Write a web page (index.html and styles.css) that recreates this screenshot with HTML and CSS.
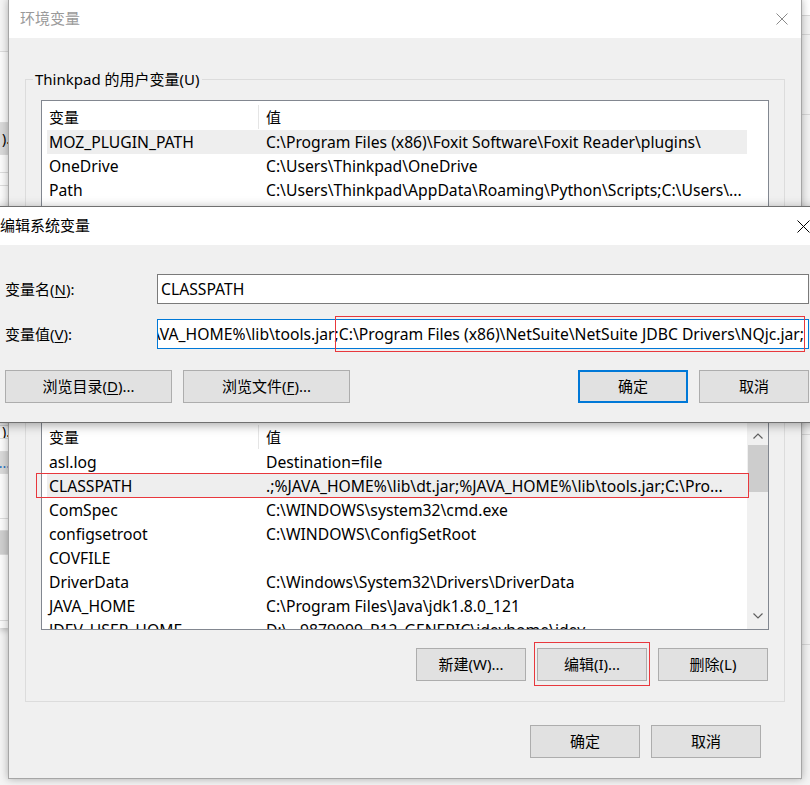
FILE: index.html
```html
<!DOCTYPE html>
<html lang="zh-CN">
<head>
  <meta charset="UTF-8">
  <title>环境变量</title>
  <link rel="stylesheet" href="styles.css">
</head>
<body>

  <!-- background windows peeking out at the edges -->
  <div class="bg-left">
    <div class="bl bl-top"></div>
    <div class="bl bl-plain h71"></div>
    <div class="bl bl-cell h32">).</div>
    <div class="bl bl-plain h18"></div>
    <div class="bl bl-plain h13"></div>
    <div class="bl bl-plain h240"></div>
    <div class="bl bl-plain h13">).</div>
    <div class="bl bl-plain h13"></div>
    <div class="bl bl-cell h22 dots">...</div>
    <div class="bl bl-plain h45"></div>
    <div class="bl bl-plain h12"></div>
    <div class="bl bl-dark h24"></div>
    <div class="bl bl-plain h66"></div>
  </div>
  <div class="bg-right">
    <div class="br h16 white"></div>
    <div class="br h19"></div>
    <div class="br h80"></div>
    <div class="br h320"></div>
    <div class="br h210"></div>
  </div>

  <!-- 环境变量 -->
  <div class="win env">
    <div class="titlebar">
      <span class="title">环境变量</span>
      <span class="close close-env">
        <svg width="12" height="12" viewBox="0 0 12 12"><path d="M0.5 0.5 L11.5 11.5 M11.5 0.5 L0.5 11.5" stroke="#8a8a8a" stroke-width="1" fill="none"/></svg>
      </span>
    </div>
    <div class="env-body">
      <fieldset class="group group-user">
        <legend>Thinkpad 的用户变量(U)</legend>
        <div class="list list-user">
          <div class="list-head">
            <div class="c1">变量</div>
            <div class="c2">值</div>
          </div>
          <div class="row sel"><div class="c1">MOZ_PLUGIN_PATH</div><div class="c2">C:\Program Files (x86)\Foxit Software\Foxit Reader\plugins\</div></div>
          <div class="row"><div class="c1">OneDrive</div><div class="c2">C:\Users\Thinkpad\OneDrive</div></div>
          <div class="row"><div class="c1">Path</div><div class="c2">C:\Users\Thinkpad\AppData\Roaming\Python\Scripts;C:\Users\...</div></div>
        </div>
        <div class="btn-row">
          <button class="btn">新建(N)...</button>
          <button class="btn">编辑(E)...</button>
          <button class="btn">删除(D)</button>
        </div>
      </fieldset>

      <fieldset class="group group-sys">
        <legend>系统变量(S)</legend>
        <div class="list list-sys">
          <div class="list-main">
            <div class="list-head">
              <div class="c1">变量</div>
              <div class="c2">值</div>
            </div>
            <div class="row"><div class="c1">asl.log</div><div class="c2">Destination=file</div></div>
            <div class="row sel marked"><div class="c1">CLASSPATH</div><div class="c2">.;%JAVA_HOME%\lib\dt.jar;%JAVA_HOME%\lib\tools.jar;C:\Pro...</div></div>
            <div class="row"><div class="c1">ComSpec</div><div class="c2">C:\WINDOWS\system32\cmd.exe</div></div>
            <div class="row"><div class="c1">configsetroot</div><div class="c2">C:\WINDOWS\ConfigSetRoot</div></div>
            <div class="row"><div class="c1">COVFILE</div><div class="c2"></div></div>
            <div class="row"><div class="c1">DriverData</div><div class="c2">C:\Windows\System32\Drivers\DriverData</div></div>
            <div class="row"><div class="c1">JAVA_HOME</div><div class="c2">C:\Program Files\Java\jdk1.8.0_121</div></div>
            <div class="row"><div class="c1">JDEV_USER_HOME</div><div class="c2">D:\...9879999_R12_GENERIC\jdevhome\jdev</div></div>
          </div>
          <div class="scrollbar">
            <svg class="arrow arrow-up" width="10" height="6" viewBox="0 0 10 6"><path d="M0.5 5.5 L5 1 L9.5 5.5" stroke="#606060" stroke-width="1.2" fill="none"/></svg>
            <div class="thumb"></div>
            <div class="track"></div>
            <svg class="arrow arrow-down" width="10" height="6" viewBox="0 0 10 6"><path d="M0.5 0.5 L5 5 L9.5 0.5" stroke="#606060" stroke-width="1.2" fill="none"/></svg>
          </div>
        </div>
        <div class="btn-row">
          <button class="btn">新建(W)...</button>
          <button class="btn marked-btn">编辑(I)...</button>
          <button class="btn">删除(L)</button>
        </div>
      </fieldset>

      <div class="dialog-actions">
        <button class="btn">确定</button>
        <button class="btn">取消</button>
      </div>
      <svg class="grip" width="10" height="10" viewBox="0 0 10 10" fill="#b8b8b8">
        <rect x="8" y="0" width="2" height="2"/>
        <rect x="4" y="4" width="2" height="2"/><rect x="8" y="4" width="2" height="2"/>
        <rect x="0" y="8" width="2" height="2"/><rect x="4" y="8" width="2" height="2"/><rect x="8" y="8" width="2" height="2"/>
      </svg>
    </div>
  </div>

  <!-- 编辑系统变量 -->
  <div class="win edit">
    <div class="titlebar">
      <span class="title">编辑系统变量</span>
      <span class="close close-edit">
        <svg width="13" height="13" viewBox="0 0 13 13"><path d="M0.5 0.5 L12.5 12.5 M12.5 0.5 L0.5 12.5" stroke="#000" stroke-width="1" fill="none"/></svg>
      </span>
    </div>
    <div class="edit-body">
      <div class="field-grid">
        <label class="field-label">变量名(<u>N</u>):</label>
        <div class="input"><div class="input-text">CLASSPATH</div></div>
        <label class="field-label">变量值(<u>V</u>):</label>
        <div class="input focused"><div class="input-text scrolled">%JAVA_HOME%\lib\tools.jar<span class="mark">;C:\Program Files (x86)\NetSuite\NetSuite JDBC Drivers\NQjc.jar;</span></div></div>
      </div>
      <div class="edit-actions">
        <button class="btn wide">浏览目录(<u>D</u>)...</button>
        <button class="btn wide">浏览文件(<u>F</u>)...</button>
        <button class="btn default push">确定</button>
        <button class="btn">取消</button>
      </div>
    </div>
  </div>

</body>
</html>
```

FILE: styles.css
```css
* {
  box-sizing: border-box;
}

body {
  margin: 0;
  width: 810px;
  height: 785px;
  overflow: hidden;
  position: relative;
  background: #f4f4f4;
  font-family: "Noto Sans", "Noto Sans CJK SC", sans-serif;
  font-size: 15px;
  color: #000;
}

/* ---------- background windows ---------- */

.bg-left {
  position: absolute;
  left: 0;
  top: 0;
  width: 10px;
  height: 628px;
  display: flex;
  flex-direction: column;
  background: #fafafa;
  box-shadow: 0 2px 6px rgba(0,0,0,0.25);
}

.bl {
  border-bottom: 1px solid #dcdcdc;
  font-size: 14px;
  line-height: 1;
  display: flex;
  align-items: center;
  justify-content: flex-end;
  overflow: hidden;
  white-space: nowrap;
}

.bl-top { height: 52px; background: #f5f5f5; }
.bl-plain { background: #fbfbfb; }
.bl-cell { background: #d9d9d9; }
.bl-dark { background: #cfcfcf; }
.dots { color: #1a6fc0; }

.h12 { height: 12px; }
.h13 { height: 13px; }
.h16 { height: 16px; }
.h18 { height: 18px; }
.h19 { height: 19px; }
.h22 { height: 22px; }
.h24 { height: 24px; }
.h32 { height: 32px; }
.h45 { height: 45px; }
.h66 { height: 66px; }
.h71 { height: 71px; }
.h80 { height: 80px; }
.h210 { height: 210px; }
.h240 { height: 240px; }
.h320 { height: 320px; }

.bg-right {
  position: absolute;
  left: 800px;
  top: 0;
  width: 10px;
  height: 780px;
  display: flex;
  flex-direction: column;
  background: #f3f3f3;
  border-left: 1px solid #e0e0e0;
}

.br {
  border-bottom: 1px solid #d8d8d8;
}

.br.white { background: #fff; }

/* ---------- windows ---------- */

.win {
  position: absolute;
  background: #f0f0f0;
  border: 1px solid #8c8c8c;
}

.titlebar {
  height: 38px;
  background: #fff;
  display: flex;
  align-items: center;
  justify-content: space-between;
}

.title {
  padding-bottom: 3px;
}

.close {
  height: 38px;
  display: flex;
  align-items: center;
  justify-content: center;
}

.btn {
  font-family: inherit;
  font-size: 15px;
  color: #000;
  background: #e1e1e1;
  border: 1px solid #adadad;
  height: 33px;
  width: 110px;
  padding: 0;
  line-height: 1;
}

.btn.default {
  border: 2px solid #0078d7;
}

u {
  text-decoration-thickness: 1px;
  text-underline-offset: 2px;
}

/* ---------- 环境变量 ---------- */

.env {
  left: 8px;
  top: -1px;
  width: 794px;
  height: 780px;
  border-color: #a6a6a6;
  box-shadow: 0 0 8px rgba(0,0,0,0.3);
}

.env .title {
  color: #9a9a9a;
  padding-left: 11px;
}

.close-env {
  width: 38px;
}

.env-body {
  position: relative;
  height: 740px;
  padding: 0 16px;
}

.group {
  margin: 0;
  border: 1px solid #dcdcdc;
  padding: 0 15px 20px 15px;
}

.group legend {
  padding: 0 2px;
  margin-left: -8px;
  line-height: 20px;
}

.group-user {
  margin-top: 31px;
  height: 322px;
}

.group-sys {
  margin-top: 5px;
}

.list {
  background: #fff;
  border: 1px solid #828790;
  margin-top: 11px;
  overflow: hidden;
}

.list-user {
  height: 220px;
  padding: 0 21px 0 5px;
}

.list-sys {
  margin-top: 4px;
  height: 210px;
  display: flex;
  overflow: visible;
}

.list-main {
  flex: 1;
  padding-left: 5px;
  overflow-x: visible;
  overflow-y: clip;
}

.list-head,
.row {
  display: flex;
  align-items: center;
  white-space: nowrap;
  font-size: 15.7px;
}

.list-head {
  height: 29px;
  padding-top: 2px;
  font-size: 15px;
}

.row {
  height: 24px;
  padding-bottom: 1px;
  position: relative;
}

.c1 {
  width: 212px;
  padding-left: 2px;
  flex-shrink: 0;
  overflow: hidden;
}

.c2 {
  flex: 1;
  padding-left: 7px;
  overflow: hidden;
}

.list-head .c1 {
  border-right: 1px solid #e5e5e5;
  line-height: 24px;
}

.row.sel {
  background: #eeeeee;
}

.row.marked::after {
  content: "";
  position: absolute;
  left: -11px;
  right: -2px;
  top: -1px;
  bottom: 0;
  border: 1px solid #e8383d;
}

.scrollbar {
  width: 21px;
  background: #f0f0f0;
  display: flex;
  flex-direction: column;
  align-items: center;
}

.arrow-up {
  margin: 12px 0 9px;
}

.arrow-down {
  margin: 0 0 10px;
}

.thumb {
  width: 20px;
  height: 47px;
  background: #cdcdcd;
  margin-top: -3px;
}

.track {
  flex: 1;
}

.btn-row {
  display: flex;
  justify-content: flex-end;
  gap: 11px;
  margin-top: 18px;
  padding-right: 1px;
}

.marked-btn {
  position: relative;
}

.marked-btn::after {
  content: "";
  position: absolute;
  left: -4px;
  right: -4px;
  top: -7px;
  bottom: -6px;
  border: 1px solid #e8383d;
}

.dialog-actions {
  display: flex;
  justify-content: flex-end;
  gap: 11px;
  margin-top: 23px;
  padding-right: 24px;
}

.grip {
  position: absolute;
  right: 4px;
  bottom: 4px;
}

/* ---------- 编辑系统变量 ---------- */

.edit {
  left: -6px;
  top: 206px;
  width: 833px;
  height: 217px;
  border-color: #707070;
  box-shadow: 0 2px 10px rgba(0,0,0,0.35);
}

.edit .title {
  padding-left: 5px;
}

.close-edit {
  width: 46px;
}

.edit-body {
  padding: 29px 17px 0 10px;
}

.field-grid {
  display: grid;
  grid-template-columns: 152px minmax(0, 1fr);
  row-gap: 15px;
  align-items: center;
}

.field-label {
  padding-bottom: 2px;
}

.input {
  height: 30px;
  min-width: 0;
  background: #fff;
  border: 1px solid #7a7a7a;
  display: flex;
  align-items: center;
}

.input.focused {
  border-color: #0078d7;
}

.input-text {
  flex: 1;
  min-width: 0;
  padding: 0 4px 0 3px;
  white-space: nowrap;
  display: flex;
  font-size: 15.7px;
  line-height: 20px;
  overflow-x: clip;
  overflow-y: visible;
}

.input-text.scrolled {
  justify-content: flex-end;
}

.mark {
  position: relative;
  flex-shrink: 0;
}

.mark::after {
  content: "";
  position: absolute;
  left: 0;
  right: -1px;
  top: -8px;
  bottom: -8px;
  border: 1px solid #e8383d;
}

.edit-actions {
  display: flex;
  gap: 11px;
  margin-top: 21px;
}

.btn.wide {
  width: 167px;
}

.btn.push {
  margin-left: auto;
}
```
